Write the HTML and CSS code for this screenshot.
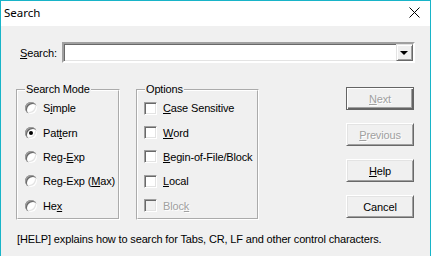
FILE: index.html
```html
<!DOCTYPE html>
<html>
<head>
    <link rel="stylesheet" href="styles.css">
</head>
<body>
    <div class="window">
        <div class="titlebar">
            <span class="title">Search</span>
            <svg class="close" width="11" height="11" viewBox="0 0 11 11">
                <path d="M0.5 0.5 L10.5 10.5 M10.5 0.5 L0.5 10.5" stroke="#000" stroke-width="1" fill="none"/>
            </svg>
        </div>

        <div class="client">
            <div class="search-row">
                <label for="searchText"><u>S</u>earch:</label>
                <div class="combo">
                    <input type="text" id="searchText">
                    <span class="drop"><span class="arrow"></span></span>
                </div>
            </div>

            <div class="main">
                <fieldset class="group mode">
                    <legend>Search Mode</legend>
                    <div class="item"><span class="radio"></span>S<u>i</u>mple</div>
                    <div class="item"><span class="radio checked"></span>Pat<u>t</u>ern</div>
                    <div class="item"><span class="radio"></span>Reg-<u>E</u>xp</div>
                    <div class="item"><span class="radio"></span>Reg-Exp (<u>M</u>ax)</div>
                    <div class="item"><span class="radio"></span>He<u>x</u></div>
                </fieldset>

                <fieldset class="group options">
                    <legend>Options</legend>
                    <div class="item"><span class="check"></span><u>C</u>ase Sensitive</div>
                    <div class="item"><span class="check"></span><u>W</u>ord</div>
                    <div class="item"><span class="check"></span><u>B</u>egin-of-File/Block</div>
                    <div class="item"><span class="check"></span><u>L</u>ocal</div>
                    <div class="item disabled"><span class="check"></span>Bloc<u>k</u></div>
                </fieldset>

                <div class="buttons">
                    <button class="default" disabled><u>N</u>ext</button>
                    <button disabled><u>P</u>revious</button>
                    <button><u>H</u>elp</button>
                    <button>Cancel</button>
                </div>
            </div>

            <p class="hint">[HELP] explains how to search for Tabs, CR, LF and other control characters.</p>
        </div>
    </div>
</body>
</html>
```

FILE: styles.css
```css
body {
    margin: 0;
    background: #f0f0f0;
    font-family: "Liberation Sans", Arial, sans-serif;
    font-size: 11px;
    letter-spacing: -0.15px;
    color: #000;
}
u {
    text-decoration: underline;
    text-underline-offset: 1px;
}
.window {
    width: 431px;
    height: 256px;
    box-sizing: border-box;
    border: 1px solid #18b4c8;
    border-bottom: none;
    background: #f0f0f0;
    display: flex;
    flex-direction: column;
}
.titlebar {
    height: 25px;
    background: #fff;
    display: flex;
    align-items: center;
    justify-content: space-between;
    padding: 0 10px 0 3px;
}
.title {
    font-family: "Noto Sans", sans-serif;
    font-size: 11.5px;
    letter-spacing: 0;
    margin-top: -2px;
}
.close {
    margin-top: -2px;
}
.client {
    flex: 1;
    padding: 16px 15px 0 15px;
}
.search-row {
    display: flex;
    align-items: center;
    gap: 5px;
    margin-left: 4px;
}
.combo {
    width: 353px;
    height: 21px;
    box-sizing: border-box;
    border: 2px solid;
    border-color: #a0a0a0 #fff #fff #a0a0a0;
    box-shadow: inset 1px 1px 0 #696969, inset -1px -1px 0 #e3e3e3;
    background: #fff;
    display: flex;
    align-items: center;
}
.combo input {
    flex: 1;
    border: none;
    outline: none;
    background: transparent;
    font: inherit;
    padding: 0 2px;
    min-width: 0;
}
.drop {
    width: 17px;
    height: 17px;
    box-sizing: border-box;
    background: #f0f0f0;
    border: 1px solid;
    border-color: #e3e3e3 #696969 #696969 #e3e3e3;
    box-shadow: inset 1px 1px 0 #fff, inset -1px -1px 0 #a0a0a0;
    display: flex;
    align-items: center;
    justify-content: center;
}
.arrow {
    width: 0;
    height: 0;
    border-left: 4px solid transparent;
    border-right: 4px solid transparent;
    border-top: 4px solid #000;
    margin-top: 1px;
}
.main {
    display: flex;
    gap: 16px;
    margin-top: 20px;
}
.group {
    margin: 0;
    padding: 0 0 3px 7px;
    border: 2px groove #fff;
    box-sizing: border-box;
    height: 137px;
}
.group legend {
    padding: 0 1px;
    margin-left: 0;
    line-height: 13px;
}
.mode {
    width: 104px;
}
.options {
    width: 123px;
    padding-left: 6px;
}
.options legend {
    margin-left: 1px;
}
.item {
    height: 24.4px;
    display: flex;
    align-items: center;
    white-space: nowrap;
}
.radio {
    width: 12px;
    height: 12px;
    border-radius: 50%;
    background: #fff;
    box-shadow: inset 1px 1px 0 #a0a0a0, inset 2px 2px 0 #696969, inset -1px -1px 0 #fff, inset -2px -2px 0 #e3e3e3;
    margin-right: 6px;
    display: flex;
    align-items: center;
    justify-content: center;
    flex: none;
}
.radio.checked::after {
    content: "";
    width: 4px;
    height: 4px;
    border-radius: 50%;
    background: #000;
}
.check {
    width: 13px;
    height: 13px;
    box-sizing: border-box;
    background: #fff;
    border: 1px solid;
    border-color: #a0a0a0 #fff #fff #a0a0a0;
    box-shadow: inset 1px 1px 0 #696969, inset -1px -1px 0 #e3e3e3;
    margin-right: 6px;
    flex: none;
}
.disabled {
    color: #a0a0a0;
    text-shadow: 1px 1px 0 #fff;
}
.disabled .check {
    background: #f0f0f0;
}
.buttons {
    margin-left: auto;
    margin-right: 1px;
    margin-top: 4px;
    display: flex;
    flex-direction: column;
    gap: 13px;
}
button {
    width: 68px;
    height: 23px;
    padding: 0;
    font: inherit;
    letter-spacing: inherit;
    color: #000;
    background: #f0f0f0;
    border: 1px solid;
    border-color: #fff #696969 #696969 #fff;
    box-shadow: inset 1px 1px 0 #e3e3e3, inset -1px -1px 0 #a0a0a0;
}
button:disabled {
    color: #a0a0a0;
    text-shadow: 1px 1px 0 #fff;
}
button.default {
    border-color: #646464;
    box-shadow: inset 1px 1px 0 #fff, inset -1px -1px 0 #646464, inset -2px -2px 0 #a0a0a0;
}
.hint {
    margin: 13px 0 0 1px;
}
```
